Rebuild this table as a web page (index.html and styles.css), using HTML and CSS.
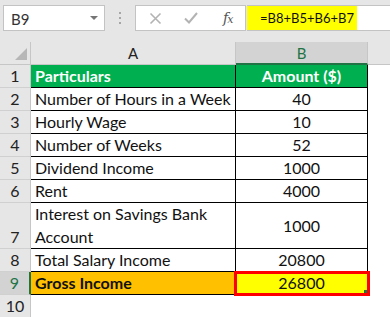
FILE: index.html
```html
<!DOCTYPE html>
<html>
<head>
<meta charset="utf-8">
<link rel="stylesheet" href="styles.css">
</head>
<body>
<div class="toolbar">
  <div class="namebox">
    <span class="nb-text">B9</span>
    <svg class="dd" width="8" height="4" viewBox="0 0 8 4"><polygon points="0,0 8,0 4,4" fill="#767676"/></svg>
  </div>
  <div class="dots"><i></i><i></i><i></i></div>
  <div class="fxbox">
    <svg class="ic" width="13" height="13" viewBox="0 0 13 13"><path d="M1.5 1.5 L11.5 11.5 M11.5 1.5 L1.5 11.5" stroke="#b3b3b3" stroke-width="1.6" fill="none"/></svg>
    <svg class="ic" width="14" height="12" viewBox="0 0 14 12"><path d="M1 6.5 L5 10.5 L13 1" stroke="#b3b3b3" stroke-width="2" fill="none"/></svg>
    <span class="fx"><i>f</i><i class="fx-x">x</i></span>
  </div>
  <div class="formula"><span class="hl">=B8+B5+B6+B7</span></div>
</div>
<div class="sheet">
  <div class="corner"><svg width="12" height="12" viewBox="0 0 12 12"><polygon points="12,0 12,12 0,12" fill="#b7b7b7"/></svg></div>
  <div class="colhead">A</div>
  <div class="colhead sel">B</div>
  <div class="colhead rest"></div>

  <div class="rowhead">1</div>
  <div class="cell a green">Particulars</div>
  <div class="cell b green">Amount ($)</div>
  <div class="blank"></div>

  <div class="rowhead">2</div>
  <div class="cell a">Number of Hours in a Week</div>
  <div class="cell b">40</div>
  <div class="blank"></div>

  <div class="rowhead">3</div>
  <div class="cell a">Hourly Wage</div>
  <div class="cell b">10</div>
  <div class="blank"></div>

  <div class="rowhead">4</div>
  <div class="cell a">Number of Weeks</div>
  <div class="cell b">52</div>
  <div class="blank"></div>

  <div class="rowhead">5</div>
  <div class="cell a">Dividend Income</div>
  <div class="cell b">1000</div>
  <div class="blank"></div>

  <div class="rowhead">6</div>
  <div class="cell a">Rent</div>
  <div class="cell b">4000</div>
  <div class="blank"></div>

  <div class="rowhead">7</div>
  <div class="cell a wrap">Interest on Savings Bank Account</div>
  <div class="cell b mid">1000</div>
  <div class="blank"></div>

  <div class="rowhead">8</div>
  <div class="cell a">Total Salary Income</div>
  <div class="cell b">20800</div>
  <div class="blank"></div>

  <div class="rowhead selrow">9</div>
  <div class="cell a orange">Gross Income</div>
  <div class="cell b yellow">26800<span class="redbox"><span class="handle"></span></span></div>
  <div class="blank"></div>

  <div class="rowhead">10</div>
  <div class="blank"></div>
  <div class="blank"></div>
  <div class="blank"></div>
</div>
</body>
</html>
```
FILE: styles.css
```css
* { box-sizing: border-box; }
html, body { margin: 0; padding: 0; }
body {
  width: 390px;
  height: 317px;
  overflow: hidden;
  background: #ffffff;
  font-family: Lato, "Open Sans", sans-serif;
  color: #111;
}

.toolbar {
  height: 42px;
  background: #e6e6e6;
  display: flex;
  align-items: flex-start;
  padding-top: 5px;
}

.namebox {
  margin-left: 3px;
  width: 102px;
  height: 26px;
  background: #fff;
  border: 1px solid #c3c3c3;
  display: flex;
  align-items: center;
  justify-content: space-between;
  padding: 0 6px 0 7px;
}
.nb-text { font-size: 15px; color: #333; padding-top: 1px; }
.dd { margin-bottom: 1px; }

.dots {
  width: 30px;
  height: 26px;
  display: flex;
  flex-direction: column;
  align-items: center;
  justify-content: center;
  gap: 3px;
}
.dots i {
  display: block;
  width: 2px;
  height: 2px;
  background: #a6a6a6;
}

.fxbox {
  width: 111px;
  height: 26px;
  background: #fff;
  border: 1px solid #c3c3c3;
  display: flex;
  align-items: center;
  padding-left: 13px;
}
.fxbox .ic:nth-child(2) { margin-left: 22px; }
.fx {
  margin-left: 25px;
  font-family: "DejaVu Serif", "Liberation Serif", serif;
  font-size: 14px;
  color: #555;
  letter-spacing: -1px;
}
.fx-x { font-size: 11px; }

.formula {
  flex: 1;
  margin-left: 1px;
  height: 26px;
  background: #fff;
  border-top: 1px solid #c3c3c3;
  border-bottom: 1px solid #c3c3c3;
  display: flex;
}
.hl {
  width: 110px;
  background: #ffff00;
  font-size: 13px;
  line-height: 24px;
  padding-left: 13px;
  color: #111;
}

.sheet {
  display: grid;
  grid-template-columns: 31px 205px 132px 1fr;
  grid-template-rows: 23px 23px repeat(5, 23px) 46px repeat(3, 23px);
}

.corner {
  background: #e6e6e6;
  border-right: 1px solid #c6c6c6;
  border-bottom: 1px solid #c6c6c6;
  display: flex;
  align-items: flex-end;
  justify-content: flex-end;
  padding: 0 3px 4px 0;
}

.colhead {
  background: #e6e6e6;
  border-right: 1px solid #c6c6c6;
  border-bottom: 1px solid #c6c6c6;
  display: flex;
  align-items: center;
  justify-content: center;
  font-size: 15px;
  color: #222;
}
.colhead.sel {
  background: #d3d3d3;
  color: #217346;
  border-bottom: 2px solid #217346;
}
.colhead.rest { border-right: none; }

.rowhead {
  background: #e6e6e6;
  border-right: 1px solid #c6c6c6;
  border-bottom: 1px solid #d0d0d0;
  display: flex;
  align-items: flex-end;
  justify-content: center;
  font-size: 16px;
  line-height: 22px;
  color: #222;
}
.rowhead.selrow {
  background: #d3d3d3;
  color: #217346;
  border-right: 2px solid #217346;
}

.cell {
  border-bottom: 1px solid #000;
  border-right: 1px solid #000;
  display: flex;
  align-items: flex-end;
  font-size: 16px;
  line-height: 22px;
  color: #111;
  white-space: nowrap;
}
.cell.a { padding-left: 4px; }
.cell.b { justify-content: center; }
.cell.mid { align-items: center; }
.cell.wrap { white-space: normal; line-height: 22.5px; }

.green { background: #00b050; color: #fff; font-weight: bold; }
.orange { background: #ffc000; font-weight: bold; }
.yellow { background: #ffff00; position: relative; }

.redbox {
  position: absolute;
  top: -1px;
  left: -2px;
  right: -3px;
  bottom: -2px;
  border: 3px solid #ff0000;
}
.handle {
  position: absolute;
  right: 0;
  bottom: 0;
  width: 3px;
  height: 3px;
  background: #217346;
}

.blank { background: #fff; }
```
